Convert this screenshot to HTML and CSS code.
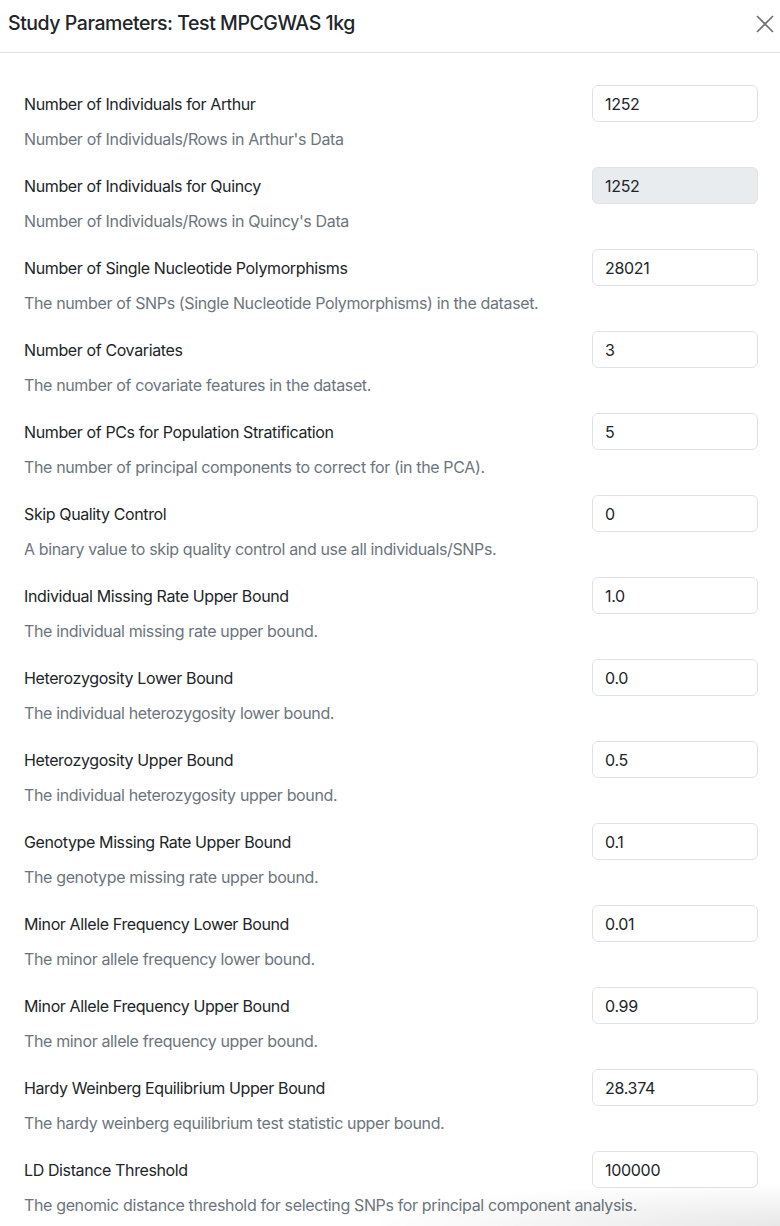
FILE: index.html
```html
<!DOCTYPE html>
<html lang="en">
<head>
<meta charset="utf-8">
<title>Study Parameters</title>
<link rel="stylesheet" href="styles.css">
</head>
<body>
<div class="modal">
  <div class="modal-header">
    <h1 class="modal-title">Study Parameters: Test MPCGWAS 1kg</h1>
    <button class="close" aria-label="Close">
      <svg width="18" height="18" viewBox="0 0 18 18"><path d="M1 1L17 17M17 1L1 17" stroke="#6f6f6f" stroke-width="1.6" fill="none"/></svg>
    </button>
  </div>
  <div class="modal-body">
    <div class="param">
      <div class="param-head"><label class="label">Number of Individuals for Arthur</label><input class="input" value="1252"></div>
      <div class="desc">Number of Individuals/Rows in Arthur's Data</div>
    </div>
    <div class="param">
      <div class="param-head"><label class="label">Number of Individuals for Quincy</label><input class="input" value="1252" disabled></div>
      <div class="desc">Number of Individuals/Rows in Quincy's Data</div>
    </div>
    <div class="param">
      <div class="param-head"><label class="label">Number of Single Nucleotide Polymorphisms</label><input class="input" value="28021"></div>
      <div class="desc">The number of SNPs (Single Nucleotide Polymorphisms) in the dataset.</div>
    </div>
    <div class="param">
      <div class="param-head"><label class="label">Number of Covariates</label><input class="input" value="3"></div>
      <div class="desc">The number of covariate features in the dataset.</div>
    </div>
    <div class="param">
      <div class="param-head"><label class="label">Number of PCs for Population Stratification</label><input class="input" value="5"></div>
      <div class="desc">The number of principal components to correct for (in the PCA).</div>
    </div>
    <div class="param">
      <div class="param-head"><label class="label">Skip Quality Control</label><input class="input" value="0"></div>
      <div class="desc">A binary value to skip quality control and use all individuals/SNPs.</div>
    </div>
    <div class="param">
      <div class="param-head"><label class="label">Individual Missing Rate Upper Bound</label><input class="input" value="1.0"></div>
      <div class="desc">The individual missing rate upper bound.</div>
    </div>
    <div class="param">
      <div class="param-head"><label class="label">Heterozygosity Lower Bound</label><input class="input" value="0.0"></div>
      <div class="desc">The individual heterozygosity lower bound.</div>
    </div>
    <div class="param">
      <div class="param-head"><label class="label">Heterozygosity Upper Bound</label><input class="input" value="0.5"></div>
      <div class="desc">The individual heterozygosity upper bound.</div>
    </div>
    <div class="param">
      <div class="param-head"><label class="label">Genotype Missing Rate Upper Bound</label><input class="input" value="0.1"></div>
      <div class="desc">The genotype missing rate upper bound.</div>
    </div>
    <div class="param">
      <div class="param-head"><label class="label">Minor Allele Frequency Lower Bound</label><input class="input" value="0.01"></div>
      <div class="desc">The minor allele frequency lower bound.</div>
    </div>
    <div class="param">
      <div class="param-head"><label class="label">Minor Allele Frequency Upper Bound</label><input class="input" value="0.99"></div>
      <div class="desc">The minor allele frequency upper bound.</div>
    </div>
    <div class="param">
      <div class="param-head"><label class="label">Hardy Weinberg Equilibrium Upper Bound</label><input class="input" value="28.374"></div>
      <div class="desc">The hardy weinberg equilibrium test statistic upper bound.</div>
    </div>
    <div class="param">
      <div class="param-head"><label class="label">LD Distance Threshold</label><input class="input" value="100000"></div>
      <div class="desc">The genomic distance threshold for selecting SNPs for principal component analysis.</div>
    </div>
  </div>
  <div class="corner-shade"></div>
</div>
</body>
</html>
```

FILE: styles.css
```css
* { box-sizing: border-box; }
html, body {
  margin: 0;
  padding: 0;
  background: #fff;
  font-family: Inter, "Noto Sans", "Liberation Sans", sans-serif;
  color: #212529;
  overflow: hidden;
}
.modal {
  position: relative;
  width: 780px;
  height: 1226px;
  overflow: hidden;
}
.modal-header {
  height: 53px;
  border-bottom: 1px solid #dee2e6;
  display: flex;
  align-items: center;
  justify-content: space-between;
  padding: 0 6px 4px 8px;
}
.modal-title {
  margin: 0;
  font-size: 19.5px;
  font-weight: 500;
  line-height: 1.2;
  letter-spacing: -0.45px;
}
.close {
  border: 0;
  background: transparent;
  padding: 0;
  width: 18px;
  height: 18px;
  display: flex;
  cursor: pointer;
}
.modal-body {
  padding: 32px 22px 0 24px;
}
.param {
  margin-bottom: 16px;
}
.param-head {
  display: flex;
  align-items: center;
  justify-content: space-between;
  height: 37px;
}
.label {
  font-size: 16px;
  line-height: 24px;
  letter-spacing: -0.38px;
}
.input {
  width: 166px;
  height: 37px;
  border: 1px solid #dee2e6;
  border-radius: 6px;
  padding: 0 12px;
  font-family: inherit;
  font-size: 16px;
  color: #212529;
  background: #fff;
  letter-spacing: -0.3px;
}
.input:disabled {
  background: #e9ecef;
  color: #212529;
  opacity: 1;
}
.desc {
  margin-top: 5px;
  font-size: 16px;
  line-height: 24px;
  color: #6c757d;
  letter-spacing: -0.36px;
}
.corner-shade {
  position: absolute;
  left: 380px;
  right: 0;
  bottom: 0;
  height: 60px;
  background: radial-gradient(ellipse 420px 44px at 100% 100%, rgba(0,0,0,0.09), rgba(0,0,0,0) 100%);
  pointer-events: none;
}
```
